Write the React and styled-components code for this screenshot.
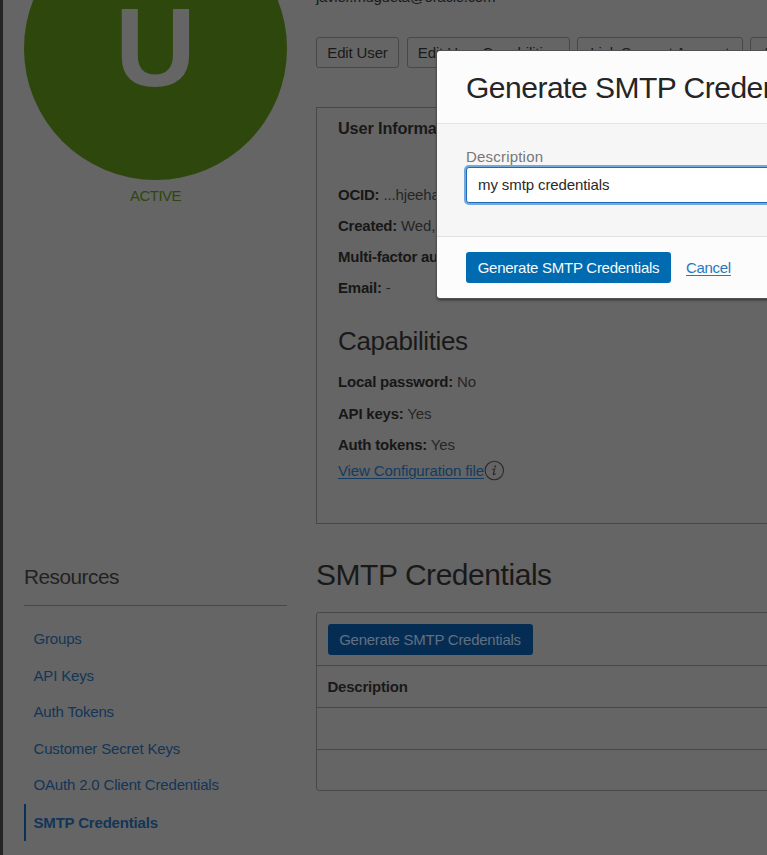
import React from 'react';
import styled, { createGlobalStyle } from 'styled-components';

const GlobalStyle = createGlobalStyle`
  * { box-sizing: border-box; }
  body {
    margin: 0;
    background: #656565;
    font-family: "Liberation Sans", Arial, sans-serif;
    font-size: 15px;
    letter-spacing: -0.14px;
    color: #191919;
    overflow: hidden;
  }
  a { color: inherit; }
  h1, h2, h3, p, ul { margin: 0; padding: 0; font-weight: 400; }
`;

const Page = styled.div`
  position: relative;
  display: flex;
  gap: 29px;
  width: 767px;
  height: 855px;
  overflow: hidden;
  border-left: 3px solid #242424;
  padding-left: 21px;
`;

const Sidebar = styled.aside`
  flex: none;
  width: 263px;
`;

const Avatar = styled.div`
  width: 263px;
  height: 263px;
  margin-top: -83.5px;
  padding-top: 66px;
  border-radius: 50%;
  background: #2e470d;
  color: #656565;
  font-size: 112px;
  letter-spacing: 0;
  line-height: 130px;
  font-weight: 700;
  text-align: center;
`;

const Status = styled.p`
  margin-top: 7.5px;
  line-height: 18px;
  text-align: center;
  letter-spacing: -0.55px;
  color: #2d470d;
`;

const SidebarTitle = styled.h2`
  margin-top: 360px;
  height: 41px;
  line-height: 24px;
  font-size: 20.8px;
  letter-spacing: -0.5px;
  color: #222;
  border-bottom: 1px solid #484848;
`;

const Nav = styled.ul`
  list-style: none;
  padding-top: 14px;
`;

const NavItem = styled.li`
  height: ${(p) => (p.$active ? 37 : 36.5)}px;
  margin-top: ${(p) => (p.$active ? 1.3 : 0)}px;
  line-height: 38px;
  padding-left: ${(p) => (p.$active ? 7.5 : 9.5)}px;
  border-left: ${(p) => (p.$active ? '2px solid #0b3158' : '0')};
  font-weight: ${(p) => (p.$active ? 700 : 400)};
  letter-spacing: ${(p) => (p.$active ? -0.18 : -0.17)}px;
  color: #133557;
`;

const Main = styled.main`
  flex: none;
  width: 700px;
`;

const Email = styled.p`
  margin-top: -12px;
  line-height: 18px;
  letter-spacing: -0.28px;
`;

const Actions = styled.div`
  display: flex;
  gap: 7.5px;
  margin-top: 31px;
`;

const Button = styled.button`
  flex: none;
  width: ${(p) => p.$width}px;
  height: 31px;
  padding: 0;
  font: inherit;
  line-height: 29px;
  letter-spacing: -0.14px;
  color: #191919;
  background: transparent;
  border: 1px solid #484848;
  border-radius: 3px;
`;

const PrimaryButton = styled(Button)`
  border: 0;
  line-height: 31px;
  letter-spacing: -0.26px;
  color: ${(p) => (p.$dimmed ? '#617080' : '#f4fbff')};
  background: ${(p) => (p.$dimmed ? '#052d54' : '#006bb0')};
`;

const InfoPanel = styled.section`
  height: 417px;
  margin-top: 39px;
  padding: 10px 21px;
  border: 1px solid #484848;
`;

const InfoTitle = styled.h3`
  line-height: 20px;
  font-size: 16.3px;
  font-weight: 700;
  margin-bottom: 40.5px;
`;

const Field = styled.p`
  height: 31.3px;
  line-height: 31px;
  white-space: nowrap;
  color: #262626;
  b { color: #171717; letter-spacing: -0.22px; }
`;

const Capabilities = styled.h2`
  margin: 22.7px 0 10px;
  line-height: 30px;
  font-size: 26px;
  letter-spacing: -0.4px;
`;

const ConfigRow = styled.div`
  display: flex;
  align-items: center;
  height: 20px;
  a {
    color: #133c60;
    letter-spacing: -0.13px;
    text-underline-offset: 2px;
    text-decoration-thickness: 1px;
  }
  svg { flex: none; }
`;

const SectionTitle = styled.h2`
  margin-top: 34px;
  line-height: 34px;
  font-size: 30px;
  letter-spacing: -0.45px;
`;

const Table = styled.section`
  height: 179px;
  margin-top: 20px;
  border: 1px solid #484848;
  border-radius: 3px;
`;

const TableRow = styled.div`
  display: flex;
  align-items: center;
  height: ${(p) => p.$height}px;
  padding: 0 10.5px;
  font-weight: 700;
  letter-spacing: -0.22px;
  border-bottom: ${(p) => (p.$last ? '0' : '1px solid #484848')};
  button { font-weight: 400; }
`;

const Dialog = styled.div`
  position: absolute;
  top: 51px;
  left: 434px;
  width: 500px;
  height: 247px;
  background: #fcfcfc;
  border-radius: 3px;
  box-shadow: 0 0 0 1px #505153, 0 2px 3px rgba(0, 0, 0, 0.55);
`;

const DialogHeader = styled.header`
  height: 73px;
  padding: 19px 29px;
  line-height: 35px;
  border-bottom: 1px solid #e4e4e4;
  font-size: 30px;
  letter-spacing: -0.5px;
  color: #252525;
  white-space: nowrap;
`;

const DialogBody = styled.div`
  height: 113px;
  padding: 23px 29px;
  background: #f6f6f6;
  border-bottom: 1px solid #e1e1e1;
`;

const Label = styled.label`
  display: block;
  height: 20px;
  line-height: 19px;
  letter-spacing: 0.2px;
  color: #777;
`;

const Input = styled.input`
  display: block;
  width: 440px;
  height: 36px;
  padding: 0 11px 1px;
  font: inherit;
  letter-spacing: -0.1px;
  color: #292929;
  background: #fff;
  border: 1px solid #206bb8;
  border-radius: 3px;
  outline: 0;
  box-shadow: 0 0 0 2px #73a8de;
`;

const DialogFooter = styled.footer`
  display: flex;
  align-items: center;
  gap: 15px;
  height: 61px;
  padding: 0 29px;
  a {
    color: #2878bd;
    letter-spacing: -0.3px;
    text-underline-offset: 2px;
    text-decoration-thickness: 1px;
  }
`;

const resources = [
  'Groups', 'API Keys', 'Auth Tokens', 'Customer Secret Keys', 'OAuth 2.0 Client Credentials',
];

function InfoIcon() {
  return (
    <svg width="21" height="21" viewBox="0 0 21 21" fill="none">
      <circle cx="10.3" cy="10.5" r="9.2" stroke="#2c2c2c" strokeWidth="1.1" />
      <circle cx="11.2" cy="6.6" r="1" fill="#2c2c2c" />
      <path d="M8.3 9.5 10.7 9 9.3 13.8Q9.1 15 10.2 14.5L11.5 13.5" stroke="#2c2c2c" strokeWidth="1.2" />
    </svg>
  );
}

export default function App() {
  return (
    <>
      <GlobalStyle />
      <Page>
        <Sidebar>
          <Avatar>U</Avatar>
          <Status>ACTIVE</Status>
          <SidebarTitle>Resources</SidebarTitle>
          <Nav>
            {resources.map((name) => <NavItem key={name}>{name}</NavItem>)}
            <NavItem $active>SMTP Credentials</NavItem>
          </Nav>
        </Sidebar>
        <Main>
          <Email>javier.mugueta@oracle.com</Email>
          <Actions>
            <Button $width={83}>Edit User</Button>
            <Button $width={163}>Edit User Capabilities</Button>
            <Button $width={165.5}>Link Support Account</Button>
            <Button $width={85}>Add Tags</Button>
          </Actions>
          <InfoPanel>
            <InfoTitle>User Information</InfoTitle>
            <Field><b>OCID:</b> ...hjeeha</Field>
            <Field><b>Created:</b> Wed,</Field>
            <Field><b>Multi-factor authentication:</b></Field>
            <Field><b>Email:</b> -</Field>
            <Capabilities>Capabilities</Capabilities>
            <Field><b>Local password:</b> No</Field>
            <Field><b>API keys:</b> Yes</Field>
            <Field><b>Auth tokens:</b> Yes</Field>
            <ConfigRow><a href="#config">View Configuration file</a><InfoIcon /></ConfigRow>
          </InfoPanel>
          <SectionTitle>SMTP Credentials</SectionTitle>
          <Table>
            <TableRow $height={53}><PrimaryButton $dimmed $width={205}>Generate SMTP Credentials</PrimaryButton></TableRow>
            <TableRow $height={42}>Description</TableRow>
            <TableRow $height={41.5} />
            <TableRow $height={40} $last />
          </Table>
        </Main>
        <Dialog>
          <DialogHeader>Generate SMTP Credentials</DialogHeader>
          <DialogBody>
            <Label htmlFor="description">Description</Label>
            <Input id="description" defaultValue="my smtp credentials" />
          </DialogBody>
          <DialogFooter>
            <PrimaryButton $width={205}>Generate SMTP Credentials</PrimaryButton>
            <a href="#cancel">Cancel</a>
          </DialogFooter>
        </Dialog>
      </Page>
    </>
  );
}
